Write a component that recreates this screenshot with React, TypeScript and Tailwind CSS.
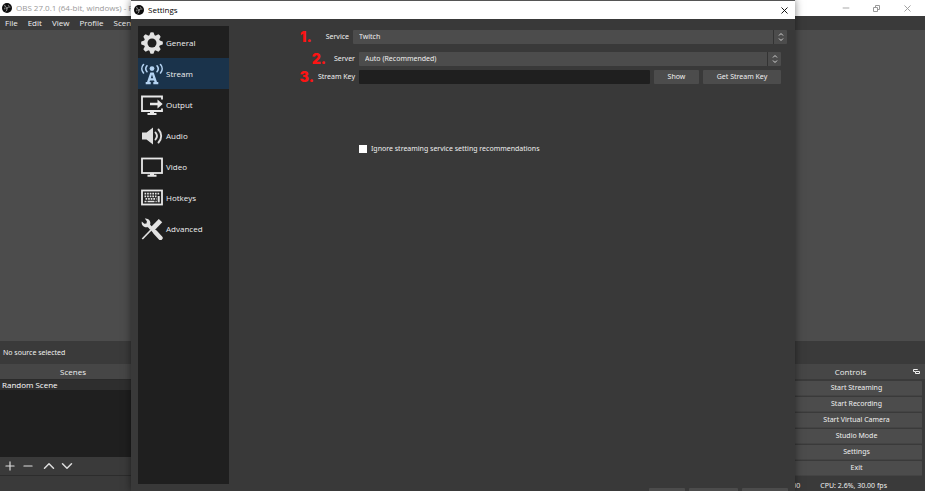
import type { ReactNode } from 'react';
import { ChevronDown, ChevronUp, Minus, Plus, X } from 'lucide-react';

const menuItems = ['File', 'Edit', 'View', 'Profile', 'Scene'];

const controls = [
  'Start Streaming',
  'Start Recording',
  'Start Virtual Camera',
  'Studio Mode',
  'Settings',
  'Exit',
];

const ObsLogo = () => (
  <svg viewBox="0 0 20 20" className="size-[10px] shrink-0">
    <circle cx="10" cy="10" r="10" fill="#0c0c0c" />
    <path
      d="M5.500 4.500c0 3 2 4.500 4.500 4.500M16 8c-3-1-5.500.5-6 3M8 16.500c2-1.500 2.500-3.500 1.500-5.500"
      fill="none"
      stroke="#b8b8b8"
      strokeWidth="1.700"
      strokeLinecap="round"
    />
    <circle cx="5.500" cy="11" r="1.800" fill="#6a6a6a" />
    <circle cx="13" cy="5" r="1.500" fill="#6a6a6a" />
  </svg>
);

const GearIcon = () => (
  <svg viewBox="0 0 22 22" className="size-[22px]">
    <g fill="#e2e2e2">
      {[0, 45, 90, 135].map((angle) => (
        <path
          key={angle}
          d="M8.200 4 9.400.4Q11-.1 12.600.4L13.800 4v14l-1.200 3.600q-1.600.5-3.200 0L8.200 18z"
          transform={`rotate(${angle} 11 11)`}
        />
      ))}
      <circle cx="11" cy="11" r="8" />
    </g>
    <circle cx="11" cy="11" r="4.500" fill="#1f1f1f" />
  </svg>
);

const AntennaIcon = () => (
  <svg viewBox="0 0 22 22" className="size-[22px]">
    <g fill="none" stroke="#b4d3f2" strokeLinecap="round">
      <path d="M2.500 1.500C.3 4 .3 7.500 2.500 10M19.500 1.500c2.200 2.500 2.200 6 0 8.500" strokeWidth="1.600" />
      <path d="M6 2.800C4.500 4.600 4.500 7 6 8.700M16 2.800c1.500 1.800 1.500 4.200 0 5.900" strokeWidth="1.600" />
    </g>
    <circle cx="11" cy="5.600" r="2.400" fill="#b4d3f2" />
    <path
      d="M9.300 9.500h3.400L16 19h1.300v2.200h-5V19h1.200l-.5-1.600H9L8.500 19h1.200v2.200h-5V19H6zM11 11.500l-1.200 3.700h2.400z"
      fill="#b4d3f2"
      fillRule="evenodd"
    />
  </svg>
);

const OutputIcon = () => (
  <svg viewBox="0 0 22 22" className="size-[22px]">
    <path d="M21 5.500V2.500H1v14.500h20v-2.500" fill="none" stroke="#e8e8e8" strokeWidth="1.800" />
    <path d="M9 8.700h7.500V5.500l5.200 4.500-5.200 4.500v-3.200H9z" fill="#e8e8e8" />
    <path d="M9 17.500h4v1.500h2.500v2h-9v-2H9z" fill="#e8e8e8" />
  </svg>
);

const SpeakerIcon = () => (
  <svg viewBox="0 0 22 22" className="size-[22px]">
    <path d="M1 7.500h4.500L12 2.500v17l-6.500-5H1z" fill="#dedede" />
    <path
      d="M14.500 7.500c1.700 2 1.700 5 0 7M17.500 4.500c3.600 3.800 3.600 9.200 0 13"
      fill="none"
      stroke="#dedede"
      strokeWidth="1.900"
      strokeLinecap="round"
    />
  </svg>
);

const MonitorIcon = () => (
  <svg viewBox="0 0 22 22" className="size-[22px]">
    <rect x="1" y="2.500" width="20" height="14.500" fill="none" stroke="#e8e8e8" strokeWidth="1.800" />
    <path d="M9 17h4v1.800h2.500v2h-9v-2H9z" fill="#e8e8e8" />
  </svg>
);

const KeyboardIcon = () => (
  <svg viewBox="0 0 22 22" className="size-[22px]">
    <rect x="1" y="3.500" width="20" height="14" fill="none" stroke="#e8e8e8" strokeWidth="1.800" />
    <g stroke="#e2e2e2" strokeWidth="1.700">
      <path d="M3.500 6.700h15" strokeDasharray="1.700 .9" />
      <path d="M3.500 9.300h12M4.500 11.900h11" strokeDasharray="1.700 .9" />
      <path d="M3.500 14.500h2M6.500 14.500h7M14.500 14.500h1.200" />
      <path d="M17.700 9v6.300" strokeWidth="2" />
    </g>
  </svg>
);

const ToolsIcon = () => (
  <svg viewBox="0 0 22 22" className="size-[22px]">
    <g stroke="#e2e2e2" fill="none">
      <path d="M1.300 21 10 12" strokeWidth="1.700" />
      <path d="m10 12.500 9.500-9.800" strokeWidth="4.800" strokeLinejoin="round" />
      <path d="m14 14 5.500 6" strokeWidth="4.400" strokeLinecap="round" />
      <path d="m6.500 6.500 3.500 3.500" strokeWidth="3.200" />
    </g>
    <path d="M.8 3.500C0 6.800 2.800 10 6.500 9.200l2.700-2.700C10.200 3 7.200 0 3.800.6l2.100 2.600-.4 2.200-2.200.4z" fill="#e2e2e2" />
  </svg>
);

const sections: { label: string; icon: ReactNode }[] = [
  { label: 'General', icon: <GearIcon /> },
  { label: 'Stream', icon: <AntennaIcon /> },
  { label: 'Output', icon: <OutputIcon /> },
  { label: 'Audio', icon: <SpeakerIcon /> },
  { label: 'Video', icon: <MonitorIcon /> },
  { label: 'Hotkeys', icon: <KeyboardIcon /> },
  { label: 'Advanced', icon: <ToolsIcon /> },
];

const Step = ({ children }: { children: ReactNode }) => (
  <span className="font-['Inter'] text-[14px] leading-[14px] font-black text-[#fb1414]">{children}</span>
);

const Select = ({ id, value }: { id: string; value: string }) => (
  <div className="relative h-[14px] flex-1">
    <select id={id} className="block h-full w-full appearance-none rounded-[1px] bg-[#4c4c4c] pl-[6px] text-[#f0f0f0] outline-none">
      <option>{value}</option>
    </select>
    <span className="pointer-events-none absolute inset-y-0 right-0 flex w-[14px] flex-col items-center justify-center border-l border-[#333333] text-[#d5d5d5]">
      <svg viewBox="0 0 6 10" className="h-[10px] w-[6px]" fill="none" stroke="currentColor">
        <path d="M1 3.500 3 1.500l2 2M1 6.500l2 2 2-2" />
      </svg>
    </span>
  </div>
);

const SettingsDialog = () => (
  <div
    role="dialog"
    aria-label="Settings"
    className="absolute inset-y-0 right-[130px] left-[131px] flex flex-col overflow-hidden border-t border-[#555555] bg-[#393939] shadow-[0_0_8px_rgba(0,0,0,0.5)]"
  >
    <header className="flex h-[18px] shrink-0 items-center bg-white px-[3px] text-black">
      <ObsLogo />
      <h2 className="ml-1 flex-1 font-['Open_Sans'] text-[8px]">Settings</h2>
      <button aria-label="Close" className="px-[2px]">
        <X className="size-[11px]" strokeWidth={2} />
      </button>
    </header>

    <div className="flex min-h-0 flex-1 pt-[7px] pl-[7px]">
      <nav className="mb-1 w-[91px] shrink-0 bg-[#1f1f1f] pt-px font-['Open_Sans'] text-[8px]">
        {sections.map(({ label, icon }) => (
          <button
            key={label}
            className={`flex h-[31px] w-full items-center gap-[3px] pl-[3px] text-[#f0f0f0] ${
              label === 'Stream' ? 'bg-[#1a334b]' : ''
            }`}
          >
            {icon}
            {label}
          </button>
        ))}
      </nav>

      <form className="flex min-w-0 flex-1 flex-col pt-[4px] pr-[8px]">
        <div className="flex items-center gap-1">
          <div className="flex w-[120px] items-center justify-end gap-[14px]">
            <Step>1.</Step>
            <label htmlFor="service">Service</label>
          </div>
          <Select id="service" value="Twitch" />
        </div>

        <div className="mt-2 flex items-center gap-1 pr-[6px]">
          <div className="flex w-[126px] items-center justify-end gap-2">
            <Step>2.</Step>
            <label htmlFor="server">Server</label>
          </div>
          <Select id="server" value="Auto (Recommended)" />
        </div>

        <div className="mt-1 flex items-center gap-1 pr-[6px]">
          <div className="flex w-[126px] items-center justify-end gap-1">
            <Step>3.</Step>
            <label htmlFor="stream-key">Stream Key</label>
          </div>
          <input id="stream-key" type="password" className="h-[14px] min-w-0 flex-1 rounded-[1px] bg-[#1f1f1f] px-1 outline-none" />
          <button type="button" className="h-[14px] w-[45px] rounded-[1px] bg-[#4c4c4c]">Show</button>
          <button type="button" className="h-[14px] w-[78px] rounded-[1px] bg-[#4c4c4c]">Get Stream Key</button>
        </div>

        <label className="mt-[60px] ml-[130px] flex items-center gap-1">
          <input type="checkbox" className="size-2 appearance-none bg-white checked:bg-[#1a334b]" />
          Ignore streaming service setting recommendations
        </label>
      </form>
    </div>

    <footer className="flex h-[3px] shrink-0 items-start justify-end gap-1 pr-[7px]">
      <button className="h-[14px] w-[36px] rounded-[1px] bg-[#4c4c4c]" aria-label="OK" />
      <button className="h-[14px] w-[49px] rounded-[1px] bg-[#4c4c4c]" aria-label="Cancel" />
      <button className="h-[14px] w-[46px] rounded-[1px] bg-[#4c4c4c]" aria-label="Apply" />
    </footer>
  </div>
);

export default function App() {
  return (
    <div className="relative flex h-screen flex-col overflow-hidden bg-[#3a3a3a] font-['Noto_Sans',sans-serif] text-[7px] leading-[10px] text-[#f0f0f0]">
      <header className="flex h-4 shrink-0 items-center bg-white pr-[12px] pl-[2px] text-[#999999]">
        <ObsLogo />
        <h1 className="ml-1 flex-1 font-['Open_Sans'] text-[8px] whitespace-nowrap">OBS 27.0.1 (64-bit, windows) - P</h1>
        <div className="flex items-center gap-[21px]">
          <button aria-label="Minimize"><Minus className="size-[10px]" strokeWidth={2} /></button>
          <button aria-label="Restore">
            <svg viewBox="0 0 9 9" className="size-[9px]" fill="none" stroke="currentColor">
              <path d="M1.500 3.500h4v4h-4zM3.500 3V1.500h4v4H6" />
            </svg>
          </button>
          <button aria-label="Close"><X className="size-[11px]" strokeWidth={2} /></button>
        </div>
      </header>

      <nav className="flex h-[14px] shrink-0 items-center gap-[10px] pl-[5px] font-['Open_Sans'] text-[8px]">
        {menuItems.map((item) => (
          <button key={item} className="whitespace-nowrap">{item}</button>
        ))}
      </nav>

      <main className="flex-1 bg-[#4c4c4c]" />

      <p className="flex h-[23px] shrink-0 items-center pl-[3px]">No source selected</p>

      <div className="flex h-[112px] shrink-0 justify-between">
        <section className="flex w-[146px] flex-col">
          <h2 className="flex h-[15px] items-center justify-center bg-[#464646] font-['Open_Sans'] text-[8px]">Scenes</h2>
          <ul className="flex-1 border-t border-[#2a2a2a] bg-[#1f1f1f] font-['Open_Sans'] text-[8px] text-white">
            <li className="bg-[#2e2e2e] pl-[2px]">Random Scene</li>
          </ul>
          <div className="flex h-[19px] items-center border-b border-[#2c2c2c] pl-[3px] text-[#dddddd]">
            <button aria-label="Add scene"><Plus className="size-[14px]" strokeWidth={2} /></button>
            <button aria-label="Remove scene" className="ml-1"><Minus className="size-[14px]" strokeWidth={2} /></button>
            <button aria-label="Move up" className="ml-[5px]"><ChevronUp className="size-[18px]" strokeWidth={2} /></button>
            <button aria-label="Move down"><ChevronDown className="size-[18px]" strokeWidth={2} /></button>
          </div>
        </section>

        <section className="flex w-[137px] flex-col">
          <div className="flex h-[15px] items-center bg-[#464646] pr-[5px]">
            <h2 className="flex-1 text-center font-['Open_Sans'] text-[8px]">Controls</h2>
            <button aria-label="Undock">
              <svg viewBox="0 0 7 7" className="size-[7px]" fill="none" stroke="currentColor">
                <path d="M4.500 2V1.500h-4v2H2M2.500 3.500h4v2h-4z" />
              </svg>
            </button>
          </div>
          <div className="flex flex-col gap-px pt-[2px] pr-[3px] pl-[3px]">
            {controls.map((label) => (
              <button key={label} className="h-[15px] rounded-[1px] border-b border-[#444444] bg-[#4c4c4c]">{label}</button>
            ))}
          </div>
        </section>
      </div>

      <footer className="flex h-[15px] shrink-0 items-center justify-end gap-5 pt-1 pr-[38px]">
        <span>REC: 00:00:00</span>
        <span>CPU: 2.6%, 30.00 fps</span>
      </footer>

      <SettingsDialog />
    </div>
  );
}
